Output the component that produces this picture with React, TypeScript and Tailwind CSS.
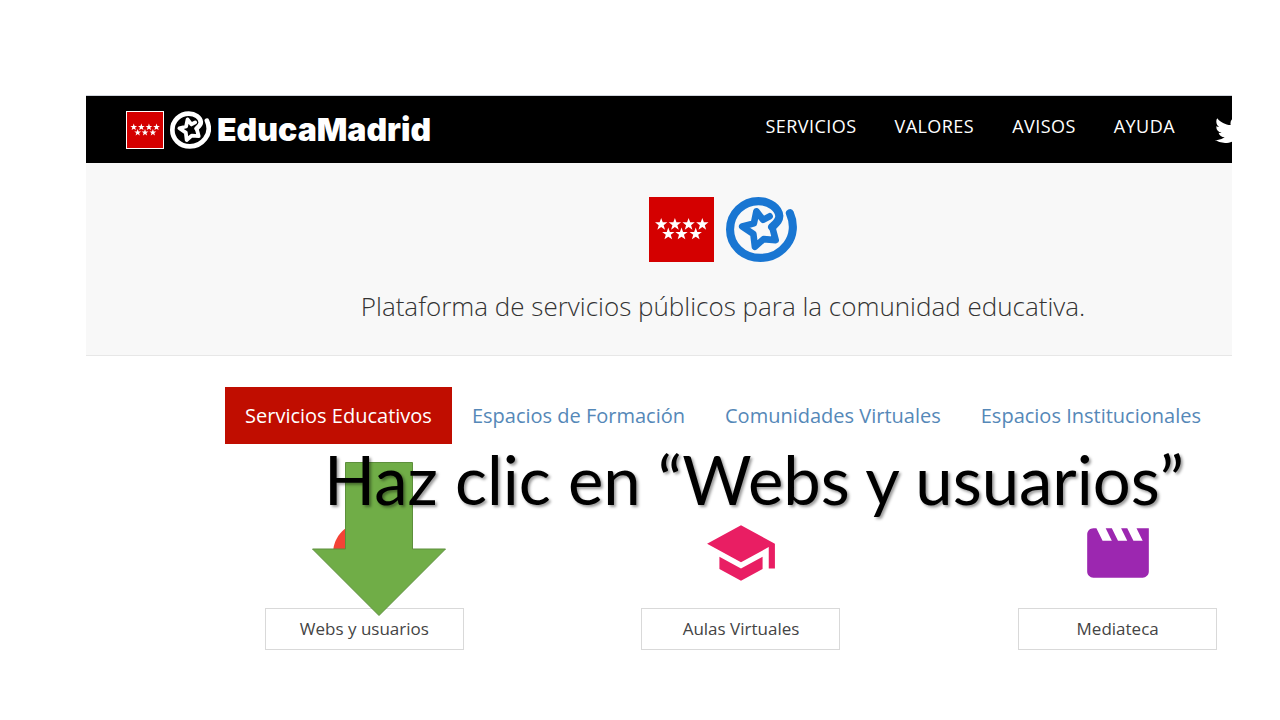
import React from 'react';

const STAR = 'M0-10 2.4-3.2H9.5L3.8 1.2 5.9 8.1 0 4-5.9 8.1-3.8 1.2-9.5-3.2H-2.4Z';

const navItems = ['Servicios', 'Valores', 'Avisos', 'Ayuda'];

const tabs = ['Servicios Educativos', 'Espacios de Formación', 'Comunidades Virtuales', 'Espacios Institucionales'];

interface Service {
  name: string;
  color: string;
  path: string;
}

const services: Service[] = [
  {
    name: 'Webs y usuarios',
    color: 'text-[#f44336]',
    path: 'M12 2C6.48 2 2 6.48 2 12s4.48 10 10 10 10-4.48 10-10S17.52 2 12 2zm0 3c1.66 0 3 1.34 3 3s-1.34 3-3 3-3-1.34-3-3 1.34-3 3-3zm0 14.2a7.2 7.2 0 0 1-6-3.22c.03-1.99 4-3.08 6-3.08 1.99 0 5.97 1.09 6 3.08a7.2 7.2 0 0 1-6 3.22z',
  },
  {
    name: 'Aulas Virtuales',
    color: 'text-[#e91e63]',
    path: 'M5 13.18v4L12 21l7-3.82v-4L12 17l-7-3.82zM12 3L1 9l11 6 9-4.91V17h2V9L12 3z',
  },
  {
    name: 'Mediateca',
    color: 'text-[#9c27b0]',
    path: 'M18 4l2 4h-3l-2-4h-2l2 4h-3l-2-4H8l2 4H7L5 4H4c-1.1 0-1.99.9-1.99 2L2 18c0 1.1.9 2 2 2h16c1.1 0 2-.9 2-2V4h-4z',
  },
];

const MadridFlag = ({ className }: { className: string }) => (
  <svg viewBox="0 0 64 64" className={className} aria-label="Comunidad de Madrid">
    <rect width="64" height="64" fill="#d40000" />
    {[12, 25.5, 39, 52.5].map((x) => (
      <path key={x} d={STAR} fill="#fff" transform={`translate(${x} 27) scale(.64)`} />
    ))}
    {[19, 32, 46].map((x) => (
      <path key={x} d={STAR} fill="#fff" transform={`translate(${x} 36.5) scale(.64)`} />
    ))}
  </svg>
);

const SpiralStar = ({ className }: { className: string }) => (
  <svg viewBox="0 0 70 64" className={className} fill="none" stroke="currentColor" strokeLinecap="round" strokeLinejoin="round" aria-hidden="true">
    <path
      strokeWidth="8"
      d="M63 16C67.500 26 67 38 60 47C53 56 43 60 34 60C16 60 4 47 4 32C4 16 17 4 32 4C43 4 52 11 52.500 18.500C53 23 49 26 45.500 29.500"
    />
    <path strokeWidth="6.5" d="M45.500 29.500L49 42.500L37 41.500L28.500 49L27 36.500L16 29L27.500 26L30 14L36.500 22.500L43 19" />
  </svg>
);

const App = () => {
  return (
    <main className="min-h-screen bg-white pt-[95px] pl-[86px] pr-12 font-['Open_Sans',sans-serif]">
      <div className="overflow-hidden pb-6">
        {/* the page runs wider than the slide frame and is cut at the right */}
        <div className="w-[calc(100%+128px)]">
          <header className="flex h-[68px] items-center border-t border-gray-300 bg-black pl-10 text-white">
            <a href="#" className="flex items-center gap-[6px]">
              <MadridFlag className="size-[38px] border border-white" />
              <SpiralStar className="h-[38px] w-[41px]" />
              <span className="font-['Inter',sans-serif] text-[32px] leading-9 font-black">EducaMadrid</span>
            </a>
            <nav className="ml-auto flex gap-[38px] pr-10 pb-2 text-lg tracking-wide uppercase">
              {navItems.map((item) => (
                <a key={item} href="#">{item}</a>
              ))}
            </nav>
            <a href="#" aria-label="Twitter" className="mr-[113px]">
              <svg viewBox="0 0 24 24" className="size-8" fill="currentColor">
                <path d="M23.954 4.569a10 10 0 0 1-2.825.775 4.958 4.958 0 0 0 2.163-2.723c-.951.555-2.005.959-3.127 1.184a4.92 4.92 0 0 0-8.384 4.482C7.691 8.094 4.066 6.130 1.640 3.161a4.822 4.822 0 0 0-.666 2.475c0 1.710.870 3.213 2.188 4.096a4.904 4.904 0 0 1-2.228-.616v.061a4.923 4.923 0 0 0 3.946 4.827 4.996 4.996 0 0 1-2.212.085 4.937 4.937 0 0 0 4.604 3.417 9.868 9.868 0 0 1-6.102 2.105c-.390 0-.779-.023-1.170-.067a13.995 13.995 0 0 0 7.557 2.209c9.054 0 13.999-7.496 13.999-13.986 0-.209 0-.420-.015-.630a9.936 9.936 0 0 0 2.460-2.548l-.047-.020z" />
              </svg>
            </a>
          </header>

          <section className="flex h-[193px] flex-col items-center border-b border-[#e7e7e7] bg-[#f8f8f8] pt-[34px]">
            <div className="flex gap-3">
              <MadridFlag className="size-[65px]" />
              <SpiralStar className="h-[65px] w-[71px] text-[#1976d2]" />
            </div>
            <h1 className="mt-6 text-[26px] leading-10 font-light text-[#333]">
              Plataforma de servicios públicos para la comunidad educativa.
            </h1>
          </section>

          <nav className="mt-[31px] flex justify-center text-xl leading-[29px]">
            {tabs.map((tab, index) => (
              <a
                key={tab}
                href="#"
                className={index === 0 ? 'bg-[#c00d00] px-5 py-[14px] text-white' : 'px-5 py-[14px] text-[#5588b8]'}
              >
                {tab}
              </a>
            ))}
          </nav>

          <section className="relative grid grid-cols-3 pt-[72px] pr-[54px] pl-[90px]">
            {services.map((service, index) => (
              <div key={service.name} className="relative flex flex-col items-center gap-[18px]">
                <svg viewBox="0 0 24 24" className={`size-[74px] ${service.color}`} fill="currentColor" aria-hidden="true">
                  <path d={service.path} />
                </svg>
                <button className="h-[42px] w-[199px] border border-[#d9d9d9] text-[17px] text-[#444]">{service.name}</button>
                {index === 0 && (
                  <svg viewBox="0 0 134 154" className="absolute -top-[54px] left-1/2 ml-[-52px] h-[154px] w-[134px]" aria-hidden="true">
                    <path d="M33.500 .5H100.500V87H133.500L67 153.500 .5 87H33.500Z" fill="#70ad47" stroke="#5d8f3c" />
                  </svg>
                )}
              </div>
            ))}
            <p className="absolute top-0 left-[238px] font-['Lato',sans-serif] text-[67px] leading-[70px] whitespace-nowrap text-black text-shadow-[2px_2px_3px_#0006]">
              Haz clic en “Webs y usuarios”
            </p>
          </section>
        </div>
      </div>
    </main>
  );
};

export default App;
